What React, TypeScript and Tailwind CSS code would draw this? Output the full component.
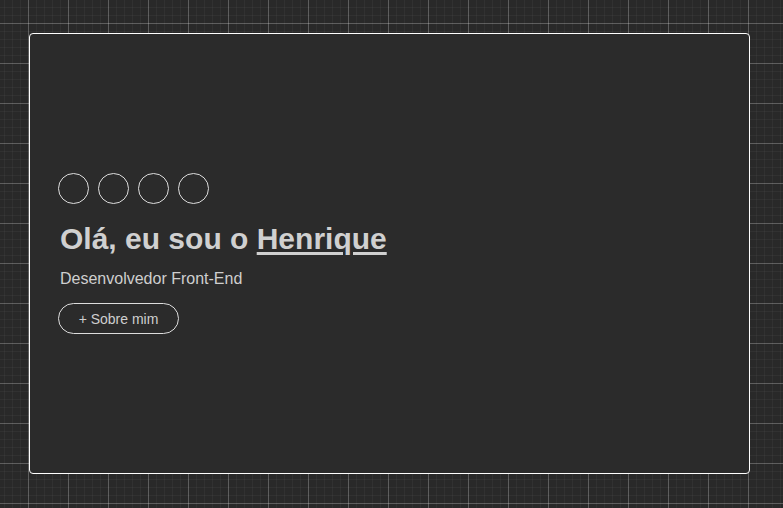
export default function App() {
  return (
    <div
      className="min-h-screen w-full bg-[#292929] bg-[linear-gradient(rgba(255,255,255,0.22)_1px,transparent_1px),linear-gradient(90deg,rgba(255,255,255,0.22)_1px,transparent_1px),linear-gradient(rgba(255,255,255,0.035)_1px,transparent_1px),linear-gradient(90deg,rgba(255,255,255,0.035)_1px,transparent_1px)] bg-[size:40px_40px,40px_40px,8px_8px,8px_8px] bg-[position:28px_23px,28px_23px,28px_23px,28px_23px] pt-[33px] pl-[29px]"
      style={{ fontFamily: '"Liberation Sans", Arial, sans-serif' }}
    >
      <div className="w-[721px] h-[441px] border border-white rounded-[4px] bg-[#2b2b2b] flex flex-col justify-center px-[28px]">
        <div className="flex gap-[9px]">
          <div className="w-[31px] h-[31px] rounded-full border border-[#dddddd]" />
          <div className="w-[31px] h-[31px] rounded-full border border-[#dddddd]" />
          <div className="w-[31px] h-[31px] rounded-full border border-[#dddddd]" />
          <div className="w-[31px] h-[31px] rounded-full border border-[#dddddd]" />
        </div>
        <h1 className="mt-[17px] text-[30px] leading-[36px] font-bold text-[#d0d0d0] pl-[2px]">
          Olá, eu sou o <span className="underline underline-offset-[3px]">Henrique</span>
        </h1>
        <p className="mt-[10px] text-base leading-6 text-[#cfcfcf] pl-[2px]">Desenvolvedor Front-End</p>
        <button className="mt-[12px] w-[121px] h-[31px] rounded-full border border-[#dddddd] text-sm text-[#cfcfcf] flex items-center justify-center">
          + Sobre mim
        </button>
      </div>
    </div>
  );
}
